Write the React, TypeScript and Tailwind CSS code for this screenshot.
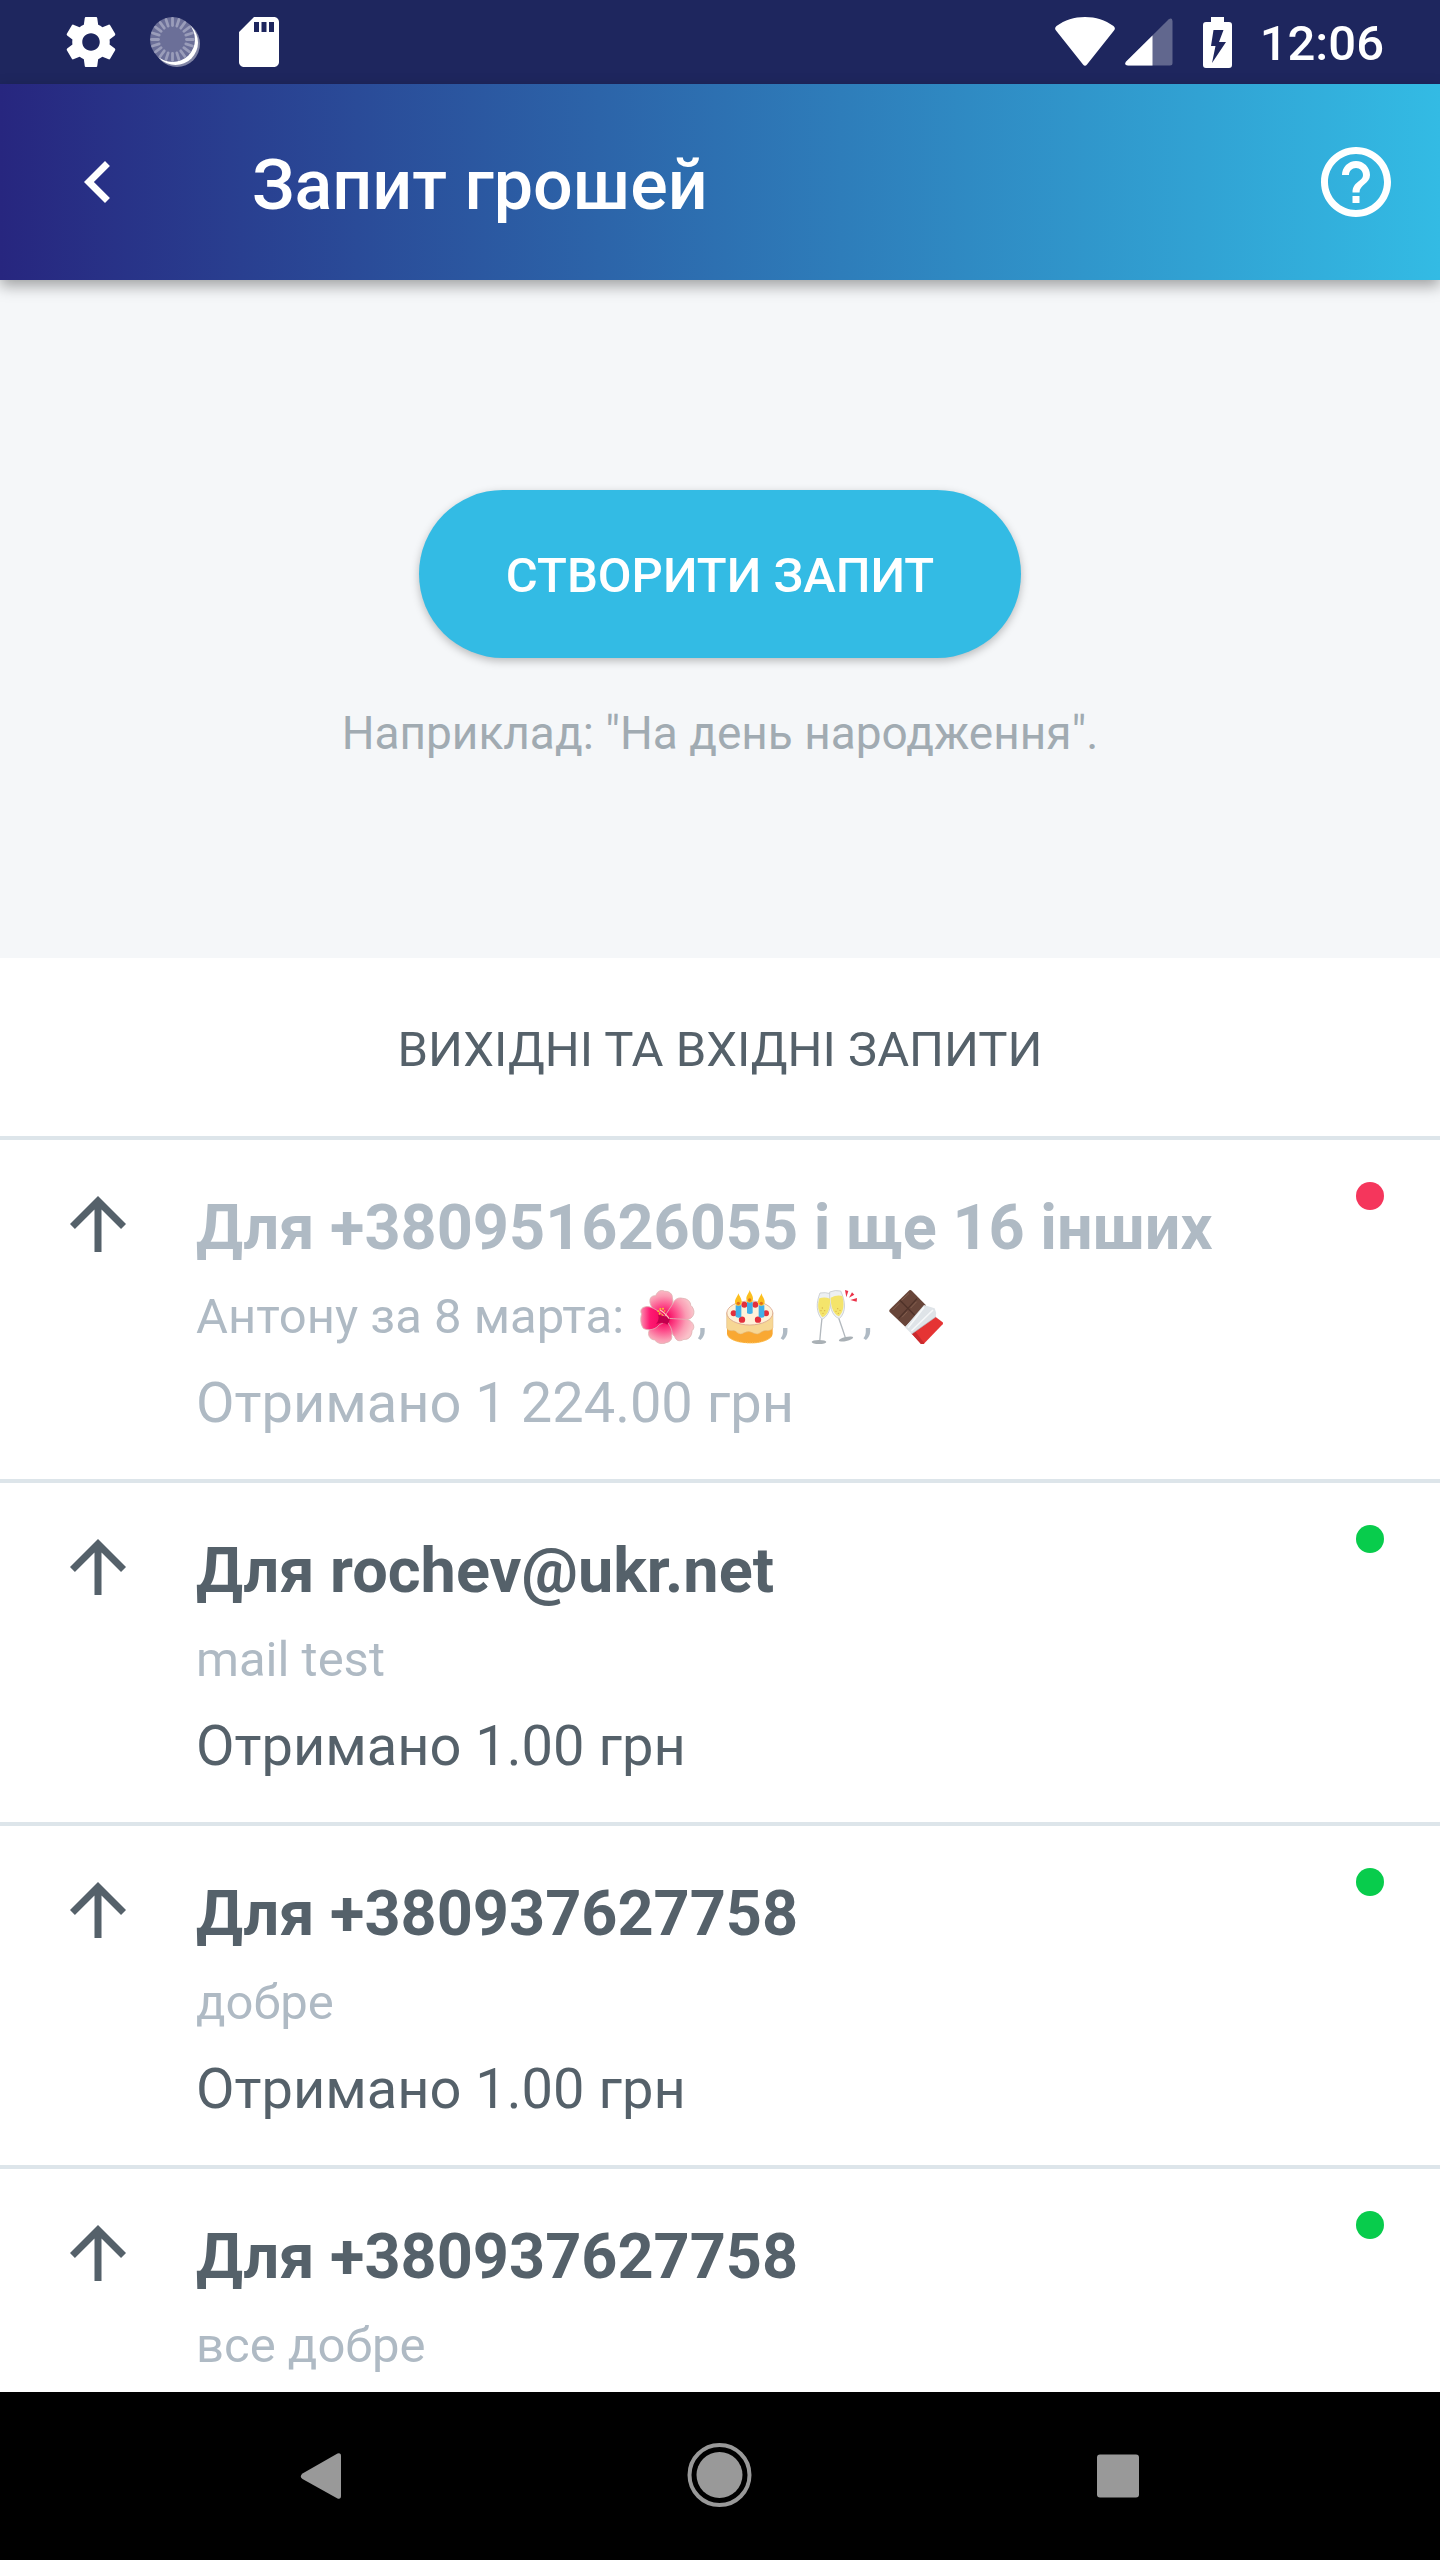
import type { ReactNode } from "react";

type RequestItem = {
  id: number;
  title: string;
  note: ReactNode;
  amount?: string;
  closed?: boolean;
};

const ticks = Array.from({ length: 20 }, (_, i) => i * 18);

function Hibiscus() {
  return (
    <svg
      role="img"
      aria-label="🌺"
      viewBox="24 28 183 162"
      className="inline-block h-[54px] w-[61px] align-[-11px]"
    >
      <defs>
        <radialGradient id="petal" gradientUnits="userSpaceOnUse" cx="108" cy="112" r="88">
          <stop offset="0.150" stopColor="#f50a62" />
          <stop offset="0.450" stopColor="#fd4f8c" />
          <stop offset="0.750" stopColor="#fa9db4" />
          <stop offset="1" stopColor="#fac1c9" />
        </radialGradient>
        <linearGradient id="petalDeep" x1="0" y1="0" x2="1" y2="0">
          <stop offset="0" stopColor="#fb8fb0" />
          <stop offset="0.350" stopColor="#ff1a72" />
          <stop offset="1" stopColor="#f0005a" />
        </linearGradient>
      </defs>
      <g stroke="#dfb3b3" strokeWidth="2.500" strokeLinejoin="round">
        <path
          fill="url(#petal)"
          d="M108 112C85 95 70 85 66 66C64 50 72 45 83 45C90 28 103 27 110 32C124 31 134 40 133 52C138 65 134 85 108 112z"
        />
        <path
          fill="url(#petal)"
          d="M108 112C118 92 130 78 136 66C142 54 152 50 164 53C180 54 188 64 188 74C200 84 200 100 193 108C184 122 150 118 108 112z"
        />
        <path
          fill="url(#petal)"
          d="M108 112C150 116 178 114 186 120C200 130 200 144 192 150C192 168 180 178 168 176C154 184 144 180 140 168C130 160 128 140 108 112z"
        />
        <path
          fill="url(#petal)"
          d="M108 112C90 125 76 138 64 148C58 162 64 176 80 178C92 192 106 190 114 186C128 184 133 174 131 164C136 150 124 128 108 112z"
        />
        <path
          fill="url(#petalDeep)"
          d="M116 114C94 92 72 76 54 78C38 80 36 92 41 100C36 114 38 132 46 143C62 152 84 146 94 132C104 128 112 124 116 114z"
        />
      </g>
      <path fill="#c2004d" d="M90 102Q106 106 126 110Q124 126 118 132Q106 122 84 130Q96 116 90 102z" />
      <path d="M96 88Q108 94 124 114" fill="none" stroke="#ffc4b8" strokeWidth="4" />
      <g fill="#fbc02d">
        <circle cx="91" cy="92" r="3" />
        <circle cx="97" cy="85" r="3" />
        <circle cx="105" cy="84" r="3" />
        <circle cx="95" cy="99" r="3" />
        <circle cx="110" cy="91" r="2.500" />
        <circle cx="103" cy="103" r="2.500" />
      </g>
    </svg>
  );
}

function Cake() {
  return (
    <svg
      role="img"
      aria-label="🎂"
      viewBox="273 28 183 162"
      className="inline-block h-[54px] w-[61px] align-[-11px]"
    >
      <path fill="#f9a832" d="M297 140H434V158C434 198 297 198 297 158z" />
      <path
        d="M300 166Q318 187 366 187T431 166"
        fill="none"
        stroke="#ffdb7d"
        strokeWidth="2.500"
        strokeDasharray="3 4"
      />
      <path
        fill="#f7d794"
        stroke="#dfb780"
        strokeWidth="1.500"
        d="M296 96V142Q300 152 312 150Q322 148 328 156Q338 164 348 156Q364 148 378 158Q390 164 400 154Q408 148 420 150Q432 150 435 140V96z"
      />
      <ellipse cx="365.500" cy="97" rx="69" ry="36" fill="#fff2d9" stroke="#d8a38c" strokeWidth="2.500" />
      <g fill="#e3303c">
        <circle cx="349" cy="72" r="9" />
        <circle cx="382" cy="72" r="9" />
        <circle cx="317" cy="98" r="9" />
        <circle cx="414" cy="98" r="9" />
        <circle cx="342" cy="117" r="9.500" />
        <circle cx="390" cy="117" r="9.500" />
      </g>
      <g fill="#42b0e8">
        <path d="M323 74h17v34q-8 6-17 0zM357 64h17v34q-8 4-17 0zM392 74h17v34q-8 6-17 0z" />
      </g>
      <g fill="#fcbf1e">
        <path d="M331 38C336 50 341 54 341 64C341 79 321 79 321 64C321 54 328 50 331 38zM365 28C369 40 375 44 375 54C375 70 355 70 355 54C355 44 362 40 365 28zM400 38C404 50 410 54 410 64C410 79 390 79 390 64C390 54 397 50 400 38z" />
      </g>
      <g fill="#e0721c">
        <circle cx="331" cy="68" r="5" />
        <circle cx="365" cy="58" r="5" />
        <circle cx="400" cy="68" r="5" />
      </g>
    </svg>
  );
}

function Glasses() {
  return (
    <svg
      role="img"
      aria-label="🥂"
      viewBox="12 28 183 162"
      className="inline-block h-[54px] w-[61px] align-[-11px]"
    >
      <g fill="none" stroke="#b3b9be" strokeWidth="4">
        <path d="M72 112Q68 148 65 184" />
        <path d="M122 112Q134 146 143 174" />
      </g>
      <ellipse cx="63" cy="184" rx="22" ry="6" fill="#a9b0b5" />
      <ellipse cx="144" cy="175" rx="22" ry="6" transform="rotate(-12 144 175)" fill="#a9b0b5" />
      <path
        fill="#edf0f2"
        stroke="#c6cbcf"
        strokeWidth="2.500"
        d="M66 37Q82 34 97 39C101 66 98 104 72 116C54 96 54 66 66 37z"
      />
      <path
        fill="#edf0f2"
        stroke="#c6cbcf"
        strokeWidth="2.500"
        d="M95 34Q112 27 128 31C142 60 146 94 124 114C100 106 94 76 95 34z"
      />
      <path fill="#f4e46b" d="M64 53Q80 48 96 54C97 78 92 102 73 110C59 94 58 72 64 53z" />
      <path fill="#f4e46b" d="M98 51Q116 42 133 46C139 70 138 92 123 107C104 100 98 74 98 51z" />
      <g fill="#d8b048">
        <circle cx="69" cy="90" r="2" />
        <circle cx="75" cy="98" r="2" />
        <circle cx="80" cy="90" r="2" />
        <circle cx="73" cy="82" r="2" />
        <circle cx="114" cy="92" r="2" />
        <circle cx="121" cy="98" r="2" />
        <circle cx="126" cy="89" r="2" />
        <circle cx="119" cy="84" r="2" />
      </g>
      <path fill="#eb3248" d="M141 28 151 31 145 50zM153 51 162 35 169 42zM157 58 177 52 176 63z" />
    </svg>
  );
}

function Chocolate() {
  return (
    <svg
      role="img"
      aria-label="🍫"
      viewBox="261 28 183 162"
      className="inline-block h-[54px] w-[61px] align-[-11px]"
    >
      <path
        fill="#684539"
        d="M334 29Q338 27 342 31L384 74 322 138 275 94Q272 90 276 86z"
      />
      <path d="M306 59 350 104M357 54 302 113" fill="none" stroke="#4f3229" strokeWidth="4" />
      <path
        d="M284 88 304 68M311 59 333 38M312 110 328 93M338 82 356 63"
        fill="none"
        stroke="#84604f"
        strokeWidth="3"
      />
      <path fill="#e53434" d="M412 108 434 125Q436 128 434 131L377 190Q373 193 369 190L340 158z" />
      <path fill="#c92a2e" d="M340 158 350 150 379 188Q373 193 369 190z" />
      <path fill="#dfe4e8" d="M378 73 410 83Q417 96 413 109L341 160 321 140z" />
      <path d="M378 80 330 141M405 88 340 151" fill="none" stroke="#f6f8f9" strokeWidth="5" />
      <path d="M413 109 341 160" fill="none" stroke="#b4bdc3" strokeWidth="2" />
    </svg>
  );
}

const requests: RequestItem[] = [
  {
    id: 1,
    title: "Для +380951626055 і ще 16 інших",
    note: (
      <>
        Антону за 8 марта: <Hibiscus />, <Cake />, <Glasses />, <Chocolate />
      </>
    ),
    amount: "Отримано 1 224.00 грн",
    closed: true,
  },
  {
    id: 2,
    title: "Для rochev@ukr.net",
    note: "mail test",
    amount: "Отримано 1.00 грн",
  },
  {
    id: 3,
    title: "Для +380937627758",
    note: "добре",
    amount: "Отримано 1.00 грн",
  },
  { id: 4, title: "Для +380937627758", note: "все добре" },
];

function StatusBar() {
  return (
    <div className="flex h-[84px] shrink-0 items-center justify-between bg-[#1e265e] pr-14 pl-[61px] text-white">
      <div className="flex gap-6">
        <svg viewBox="0 0 24 24" className="size-[60px]" fill="currentColor">
          <path d="M19.43 12.98c.04-.32.07-.64.07-.98s-.03-.66-.07-.98l2.11-1.65c.19-.15.24-.42.12-.64l-2-3.46c-.12-.22-.39-.3-.61-.22l-2.49 1c-.52-.4-1.08-.73-1.69-.98l-.38-2.65C14.46 2.18 14.25 2 14 2h-4c-.25 0-.46.18-.49.42l-.38 2.65c-.61.25-1.17.59-1.69.98l-2.49-1c-.23-.09-.49 0-.61.22l-2 3.46c-.13.22-.07.49.12.64l2.11 1.65c-.04.32-.07.65-.07.98s.03.66.07.98l-2.11 1.65c-.19.15-.24.42-.12.64l2 3.46c.12.22.39.3.61.22l2.49-1c.52.4 1.08.73 1.69.98l.38 2.65c.03.24.24.42.49.42h4c.25 0 .46-.18.49-.42l.38-2.65c.61-.25 1.17-.59 1.69-.98l2.49 1c.23.09.49 0 .61-.22l2-3.46c.12-.22.07-.49-.12-.64l-2.11-1.65zM12 15.5c-1.93 0-3.5-1.57-3.5-3.5s1.57-3.5 3.5-3.5 3.5 1.57 3.5 3.5-1.57 3.5-3.5 3.5z" />
        </svg>
        <svg viewBox="0 0 60 60" className="size-[60px]">
          <circle cx="32" cy="32" r="23" fill="#8185a5" />
          <circle cx="30.500" cy="30.500" r="22.500" fill="#fff" />
          <circle cx="27.500" cy="27.500" r="22.500" fill="#6b6f98" />
          {ticks.map((angle) => (
            <path
              key={angle}
              d="M27.500 6.500v7"
              stroke="#9a9dba"
              strokeWidth="2.800"
              strokeLinecap="round"
              transform={`rotate(${angle} 27.5 27.5)`}
            />
          ))}
        </svg>
        <svg viewBox="0 0 24 24" className="size-[60px]" fill="currentColor">
          <path d="M18 2h-8L4.020 8 4 20c0 1.100.900 2 2 2h12c1.100 0 2-.900 2-2V4c0-1.100-.900-2-2-2zm-6 6h-2V4h2v4zm3 0h-2V4h2v4zm3 0h-2V4h2v4z" />
        </svg>
      </div>
      <div className="flex items-center">
        <svg viewBox="0 0 60 50" className="mr-2.5 h-[50px] w-[60px]" fill="currentColor">
          <path d="M1 13.500Q-1 11 1.500 9C10 3 19 0 30 0s20 3 28.500 9q2.500 2 .500 4.500L32 47.500q-2 2.500-4 0z" />
        </svg>
        <svg viewBox="0 0 48 48" className="mr-[30px] size-12" fill="currentColor">
          <path d="M1.200 43.500 43.500 1.600Q47 -1 47.500 3V45q0 2.500-2.500 2.500H3Q-1.500 47 1.200 43.500z" opacity=".3" />
          <path d="M1.200 43.500 27.500 17.500v30H3Q-1.500 47 1.200 43.500z" />
        </svg>
        <svg viewBox="0 0 29 51" className="mr-7 h-[51px] w-[29px]">
          <path
            fill="currentColor"
            d="M8 0h13v5h5q3 0 3 3v40q0 3-3 3H3q-3 0-3-3V8q0-3 3-3h5z"
          />
          <path fill="#1e265e" d="M10.500 13h10L16 25h7L9 46l3.500-17H8z" />
        </svg>
        <span className="pt-1 text-[49px] leading-[60px] font-medium">12:06</span>
      </div>
    </div>
  );
}

function Toolbar() {
  return (
    <header className="z-10 flex h-[196px] shrink-0 items-center bg-linear-to-r/srgb from-[#27267f] to-[#33bbe4] px-[42px] text-white shadow-[0_6px_14px_rgba(0,0,0,0.35)]">
      <button type="button" aria-label="Назад" className="ml-3.5">
        <svg viewBox="0 0 24 24" className="size-[84px]" fill="currentColor">
          <path d="M15.410 7.410 14 6l-6 6 6 6 1.410-1.410L10.830 12z" />
        </svg>
      </button>
      <h1 className="ml-28 flex-1 pt-1.5 text-[70px] leading-[84px] font-medium">
        Запит грошей
      </h1>
      <button type="button" aria-label="Довідка">
        <svg viewBox="0 0 24 24" className="size-[84px]" fill="currentColor">
          <path d="M11 18h2v-2h-2v2zm1-16C6.480 2 2 6.480 2 12s4.480 10 10 10 10-4.480 10-10S17.520 2 12 2zm0 18c-4.410 0-8-3.590-8-8s3.590-8 8-8 8 3.590 8 8-3.590 8-8 8zm0-14c-2.210 0-4 1.790-4 4h2c0-1.100.900-2 2-2s2 .900 2 2c0 2-3 1.750-3 5h2c0-2.250 3-2.500 3-5 0-2.210-1.790-4-4-4z" />
        </svg>
      </button>
    </header>
  );
}

function RequestRow({ item }: { item: RequestItem }) {
  return (
    <li className="flex items-start border-t-4 border-[#dde5ea] px-14 pt-[42px] pb-[33px]">
      <svg
        viewBox="0 0 24 24"
        className="mr-14 size-[84px] shrink-0 text-[#55616a]"
        fill="currentColor"
      >
        <path d="m4 12 1.410 1.410L11 7.830V20h2V7.830l5.580 5.590L20 12l-8-8z" />
      </svg>
      <div className={item.closed ? "flex-1 text-[#afbac4]" : "flex-1 text-[#55616a]"}>
        <h3 className="text-[63px] leading-[92px] font-bold">{item.title}</h3>
        <p className="text-[49px] leading-[86px] text-[#afbac4]">{item.note}</p>
        {item.amount && (
          <p className="text-[56px] leading-[86px]">{item.amount}</p>
        )}
      </div>
      <span
        className={
          item.closed
            ? "size-7 shrink-0 rounded-full bg-[#f5365c]"
            : "size-7 shrink-0 rounded-full bg-[#08cc4c]"
        }
      />
    </li>
  );
}

function NavBar() {
  return (
    <nav className="grid h-[168px] shrink-0 grid-cols-3 place-items-center bg-black px-[123px] text-[#999]">
      <button type="button" aria-label="Назад">
        <svg viewBox="0 0 84 84" className="size-[84px]" fill="currentColor">
          <path d="M22.500 39.500 57.500 19.500Q61 18.500 61 22V62Q61 65.500 57.500 64.500L22.500 45Q19 42.500 22.500 39.500z" />
        </svg>
      </button>
      <button type="button" aria-label="Додому">
        <svg viewBox="0 0 84 84" className="size-[84px]">
          <circle cx="41.500" cy="41" r="30" fill="none" stroke="currentColor" strokeWidth="4" />
          <circle cx="41.500" cy="41" r="23" fill="currentColor" />
        </svg>
      </button>
      <button type="button" aria-label="Огляд">
        <svg viewBox="0 0 84 84" className="size-[84px]" fill="currentColor">
          <rect x="21" y="20.500" width="42" height="43" rx="3" />
        </svg>
      </button>
    </nav>
  );
}

export default function App() {
  return (
    <div className="flex h-screen flex-col bg-white font-['Roboto',sans-serif]">
      <StatusBar />
      <Toolbar />
      <main className="min-h-0 flex-1 overflow-hidden">
        <section className="flex h-[678px] flex-col items-center bg-[#f5f7f9] pt-[210px]">
          <button
            type="button"
            className="h-[168px] rounded-full bg-[#33bbe4] px-[87px] pt-1 text-[49px] font-medium text-white shadow-[0_3px_8px_rgba(0,0,0,0.25)]"
          >
            СТВОРИТИ ЗАПИТ
          </button>
          <p className="mt-10 text-[46px] leading-[70px] text-[#a1abb2]">
            Наприклад: "На день народження".
          </p>
        </section>
        <h2 className="pt-[62px] pb-14 text-center text-[49px] leading-[60px] text-[#55616a]">
          ВИХІДНІ ТА ВХІДНІ ЗАПИТИ
        </h2>
        <ul>
          {requests.map((item) => (
            <RequestRow key={item.id} item={item} />
          ))}
        </ul>
      </main>
      <NavBar />
    </div>
  );
}
